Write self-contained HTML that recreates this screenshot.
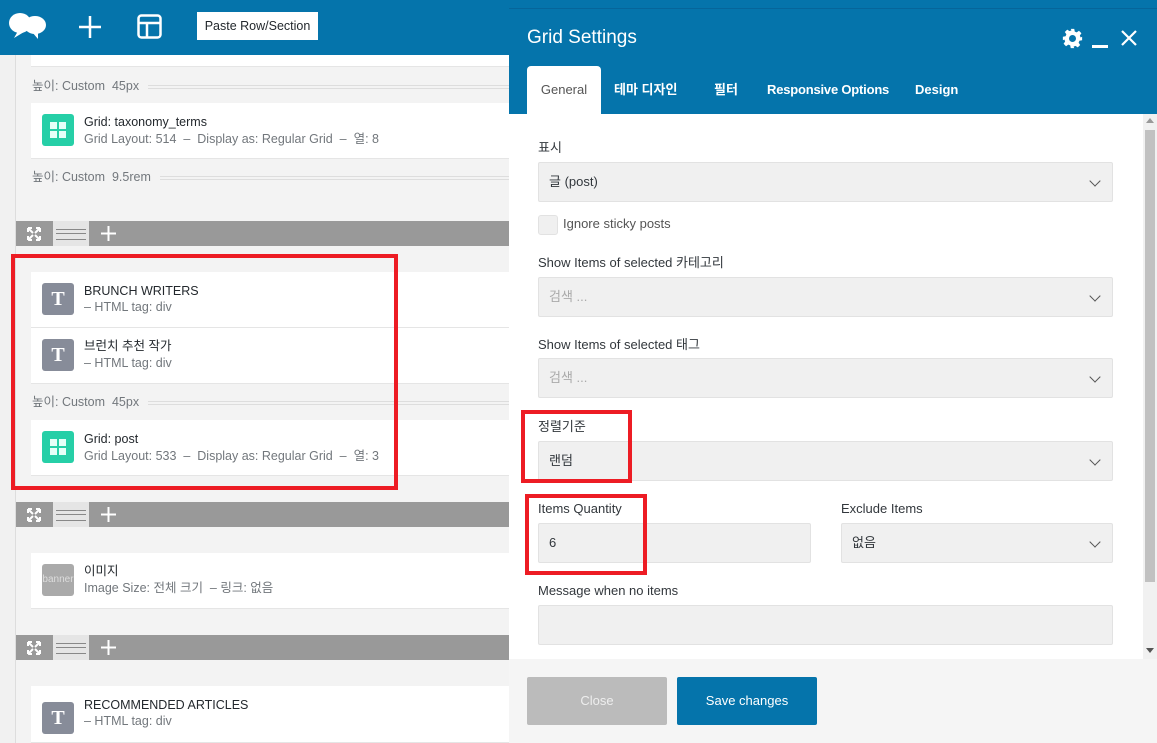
<!DOCTYPE html>
<html><head><meta charset="utf-8"><style>
*{box-sizing:border-box;margin:0;padding:0}
body{width:1157px;height:743px;overflow:hidden;position:relative;background:#f3f3f3;font-family:"Liberation Sans","Noto Sans CJK KR",sans-serif;font-size:13px;color:#23282d}
.a{position:absolute}
.top{left:0;top:0;width:1157px;height:55px;background:#0574ab}
.card{position:absolute;left:31px;width:478px;background:#fff;border-bottom:1px solid #e5e5e5}
.ic{position:absolute;left:11px;width:32px;height:32px;border-radius:3px}
.t{background:#878c99;color:#fff;font-family:"Liberation Serif",serif;font-weight:bold;font-size:20px;text-align:center;line-height:32px}
.g{background:#26cfa7}
.g:before{content:"";position:absolute;left:8px;top:8px;width:16px;height:16px;background:linear-gradient(#26cfa7,#26cfa7) 7px 0/2px 16px no-repeat,linear-gradient(#26cfa7,#26cfa7) 0 7px/16px 2px no-repeat,#e6fff8}
.tt{position:absolute;left:53px;font-size:12.5px;color:#23282d;line-height:16px}
.st{position:absolute;left:53px;font-size:12.5px;color:#72777c;line-height:16px}
.h{position:absolute;left:32px;font-size:12.5px;color:#72777c;width:477px;line-height:16px}
.h span{position:absolute;top:7px;height:4px;border-top:1px solid #ddd;border-bottom:1px solid #ddd;right:0}
.bar{position:absolute;left:16px;width:493px;height:25px;background:#999}
.bar .x{position:absolute;left:11px;top:6px;width:14px;height:14px}
.bar .l{position:absolute;left:37px;top:0;width:36px;height:25px;background:#e5e5e5}
.bar .l:before{content:"";position:absolute;left:3px;right:3px;top:8px;height:9px;border-top:1px solid #888;border-bottom:1px solid #888}
.bar .l:after{content:"";position:absolute;left:3px;right:3px;top:12px;height:1px;background:#888}
.bar .p{position:absolute;left:85px;top:5px;width:15px;height:15px}
.lbl{position:absolute;left:538px;font-size:13px;color:#32373c;line-height:16px}
.sel{position:absolute;left:538px;width:575px;height:40px;background:#f0f0f0;border:1px solid #e2e2e2;border-radius:2px;padding-left:10px;line-height:38px;font-size:13px;color:#32373c}
.sel.c:after{content:"";position:absolute;right:13px;top:14px;width:7px;height:7px;border-right:1.5px solid #555;border-bottom:1.5px solid #555;transform:rotate(45deg)}
.ph{color:#aaa}
.red{position:absolute;border:4px solid #ed1c24}
.tab{position:absolute;top:82px;color:#fff;font-size:13px;font-weight:bold;line-height:16px}
</style></head><body>
<div class="a top"></div>
<svg class="a" style="left:8px;top:10px" width="40" height="30" viewBox="0 0 40 30"><ellipse cx="12" cy="13" rx="11" ry="10" fill="#fff"/><ellipse cx="27" cy="15" rx="11" ry="9" fill="#fff"/><path d="M10 21 L6 28 L16 22Z M24 22 L30 29 L30 22Z" fill="#fff"/></svg>
<svg class="a" style="left:78px;top:15px" width="24" height="24"><path d="M12 1V23M1 12H23" stroke="#fff" stroke-width="2.5"/></svg>
<svg class="a" style="left:137px;top:14px" width="25" height="25"><rect x="1.5" y="1.5" width="22" height="22" rx="3" fill="none" stroke="#fff" stroke-width="2.5"/><path d="M1.5 9H23.5M10 9V23.5" stroke="#fff" stroke-width="2.5"/></svg>
<div class="a" style="left:197px;top:12px;width:121px;height:28px;background:#fff;font-size:12.5px;line-height:28px;text-align:center;color:#23282d">Paste Row/Section</div>
<div class="a" style="left:0;top:55px;width:16px;height:688px;background:#f1f1f1;border-right:1px solid #ddd"></div>

<div class="card" style="top:55px;height:12px"></div>
<div class="h" style="top:78px">높이: Custom&nbsp; 45px<span style="left:116px"></span></div>
<div class="card" style="top:103px;height:56px"><div class="ic g" style="top:11px"></div><div class="tt" style="top:11px">Grid: taxonomy_terms</div><div class="st" style="top:28px">Grid Layout: 514 &nbsp;– &nbsp;Display as: Regular Grid &nbsp;– &nbsp;열: 8</div></div>
<div class="h" style="top:169px">높이: Custom&nbsp; 9.5rem<span style="left:128px"></span></div>
<div class="bar" style="top:221px"><svg class="x" viewBox="0 0 14 14"><path d="M1 1L6 6M13 1L8 6M1 13L6 8M13 13L8 8M1 1H5M1 1V5M13 1H9M13 1V5M1 13H5M1 13V9M13 13H9M13 13V9" stroke="#fff" stroke-width="2"/></svg><div class="l"></div><svg class="p"><path d="M7.5 0V15M0 7.5H15" stroke="#fff" stroke-width="2"/></svg></div>

<div class="card" style="top:272px;height:56px"><div class="ic t" style="top:11px">T</div><div class="tt" style="top:11px">BRUNCH WRITERS</div><div class="st" style="top:27px">– HTML tag: div</div></div>
<div class="card" style="top:328px;height:56px"><div class="ic t" style="top:11px">T</div><div class="tt" style="top:10px">브런치 추천 작가</div><div class="st" style="top:27px">– HTML tag: div</div></div>
<div class="h" style="top:394px">높이: Custom&nbsp; 45px<span style="left:116px"></span></div>
<div class="card" style="top:420px;height:56px"><div class="ic g" style="top:11px"></div><div class="tt" style="top:11px">Grid: post</div><div class="st" style="top:28px">Grid Layout: 533 &nbsp;– &nbsp;Display as: Regular Grid &nbsp;– &nbsp;열: 3</div></div>
<div class="bar" style="top:502px"><svg class="x" viewBox="0 0 14 14"><path d="M1 1L6 6M13 1L8 6M1 13L6 8M13 13L8 8M1 1H5M1 1V5M13 1H9M13 1V5M1 13H5M1 13V9M13 13H9M13 13V9" stroke="#fff" stroke-width="2"/></svg><div class="l"></div><svg class="p"><path d="M7.5 0V15M0 7.5H15" stroke="#fff" stroke-width="2"/></svg></div>
<div class="card" style="top:553px;height:56px"><div class="ic" style="top:11px;background:#aaa;color:#ddd;font-size:10px;line-height:32px;text-align:center">banner</div><div class="tt" style="top:10px">이미지</div><div class="st" style="top:27px">Image Size: 전체 크기 &nbsp;– 링크: 없음</div></div>
<div class="bar" style="top:635px"><svg class="x" viewBox="0 0 14 14"><path d="M1 1L6 6M13 1L8 6M1 13L6 8M13 13L8 8M1 1H5M1 1V5M13 1H9M13 1V5M1 13H5M1 13V9M13 13H9M13 13V9" stroke="#fff" stroke-width="2"/></svg><div class="l"></div><svg class="p"><path d="M7.5 0V15M0 7.5H15" stroke="#fff" stroke-width="2"/></svg></div>
<div class="card" style="top:686px;height:57px"><div class="ic t" style="top:16px">T</div><div class="tt" style="top:11px">RECOMMENDED ARTICLES</div><div class="st" style="top:27px">– HTML tag: div</div></div>
<div class="red" style="left:11px;top:254px;width:387px;height:236px"></div>

<div class="a" style="left:509px;top:8px;width:648px;height:106px;background:#0574ab;border-top:1px solid #06659a"></div>
<div class="a" style="left:527px;top:27px;color:#fff;font-size:19px">Grid Settings</div>
<svg class="a" style="left:1062px;top:28px" width="21" height="21" viewBox="0 0 24 24"><path fill="#fff" d="M10 1h4l.6 3.1 2.2.9 2.6-1.8 2.8 2.8-1.8 2.6.9 2.2L23 10v4l-3.1.6-.9 2.2 1.8 2.6-2.8 2.8-2.6-1.8-2.2.9L14 23h-4l-.6-3.1-2.2-.9-2.6 1.8-2.8-2.8 1.8-2.6-.9-2.2L1 14v-4l3.1-.6.9-2.2-1.8-2.6 2.8-2.8 2.6 1.8 2.2-.9zM12 8a4 4 0 100 8 4 4 0 000-8z"/></svg>
<div class="a" style="left:1092px;top:45px;width:16px;height:3px;background:#fff"></div>
<svg class="a" style="left:1121px;top:30px" width="16" height="16"><path d="M1 1L15 15M15 1L1 15" stroke="#fff" stroke-width="2.2"/></svg>
<div class="a" style="left:527px;top:66px;width:74px;height:48px;background:#fff;border-radius:4px 4px 0 0;color:#555;text-align:center;line-height:48px;font-size:13px">General</div>
<div class="tab" style="left:614px">테마 디자인</div>
<div class="tab" style="left:714px">필터</div>
<div class="tab" style="left:767px;letter-spacing:-0.2px">Responsive Options</div>
<div class="tab" style="left:915px">Design</div>
<div class="a" style="left:509px;top:114px;width:648px;height:545px;background:#fff"></div>
<div class="a" style="left:1143px;top:114px;width:14px;height:545px;background:#f1f1f1"></div>
<div class="a" style="left:1145px;top:130px;width:10px;height:452px;background:#c1c1c1"></div>
<div class="a" style="left:1146px;top:118px;width:0;height:0;border:4px solid transparent;border-bottom:5px solid #999;border-top:0"></div>
<div class="a" style="left:1146px;top:648px;width:0;height:0;border:4px solid transparent;border-top:5px solid #555;border-bottom:0"></div>

<div class="lbl" style="top:140px">표시</div>
<div class="sel c" style="top:162px">글 (post)</div>
<div class="a" style="left:538px;top:215px;width:20px;height:20px;background:#f0f0f0;border:1px solid #e2e2e2;border-radius:3px"></div>
<div class="lbl" style="left:563px;top:216px;color:#555">Ignore sticky posts</div>
<div class="lbl" style="top:255px">Show Items of selected 카테고리</div>
<div class="sel c ph" style="top:277px">검색 ...</div>
<div class="lbl" style="top:337px">Show Items of selected 태그</div>
<div class="sel c ph" style="top:358px">검색 ...</div>
<div class="lbl" style="top:419px">정렬기준</div>
<div class="sel c" style="top:441px">랜덤</div>
<div class="lbl" style="top:501px">Items Quantity</div>
<div class="sel" style="top:523px;width:273px">6</div>
<div class="lbl" style="left:841px;top:501px">Exclude Items</div>
<div class="sel c" style="left:841px;top:523px;width:272px">없음</div>
<div class="lbl" style="top:583px">Message when no items</div>
<div class="sel" style="top:605px;height:40px"></div>
<div class="red" style="left:521px;top:410px;width:111px;height:73px"></div>
<div class="red" style="left:525px;top:494px;width:122px;height:81px"></div>

<div class="a" style="left:509px;top:659px;width:648px;height:84px;background:#f5f5f5"></div>
<div class="a" style="left:527px;top:677px;width:140px;height:48px;background:#bbb;border-radius:2px;color:#eee;text-align:center;line-height:48px;font-size:13px">Close</div>
<div class="a" style="left:677px;top:677px;width:140px;height:48px;background:#0574ab;border-radius:2px;color:#fff;text-align:center;line-height:48px;font-size:13px">Save changes</div>
</body></html>
